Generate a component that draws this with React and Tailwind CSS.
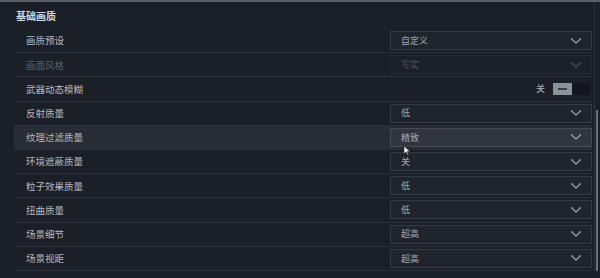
import React from "react";

const rows = [
  { label: "画质预设", value: "自定义" },
  { label: "画面风格", value: "写实", disabled: true },
  { label: "武器动态模糊", toggle: true },
  { label: "反射质量", value: "低" },
  { label: "纹理过滤质量", value: "精致", active: true },
  { label: "环境遮蔽质量", value: "关" },
  { label: "粒子效果质量", value: "低" },
  { label: "扭曲质量", value: "低" },
  { label: "场景细节", value: "超高" },
  { label: "场景视距", value: "超高" },
];

function Chevron({ dim }) {
  return (
    <svg width="12" height="8" viewBox="0 0 12 8" className="shrink-0">
      <path d="M1.5 1.8 L6 6 L10.5 1.8" fill="none" stroke={dim ? "#474e58" : "#959aa1"} strokeWidth="1.4" strokeLinecap="round" strokeLinejoin="round" />
    </svg>
  );
}

export default function App() {
  return (
    <div
      className="w-[600px] h-[278px] overflow-hidden bg-[#1b1f27] border-t-2 border-[#5b6068] relative"
      style={{ fontFamily: '"Noto Sans CJK SC", "Noto Sans", sans-serif' }}
    >
      <div className="flex">
        <div className="flex-1 pl-[14px] pr-[2px]">
          <div className="h-[27px] flex items-center pl-[2px] text-[10px] font-bold text-[#d3d6db]">基础画质</div>
          {rows.map((r, i) => (
            <div
              key={i}
              className={`h-[24.2px] flex items-center border-b border-[#2a3039] pl-[12px] ${r.active ? "bg-[#272c35]" : ""}`}
            >
              <div className={`flex-1 text-[9.5px] ${r.disabled ? "text-[#5a6069]" : "text-[#b5b9bf]"}`}>{r.label}</div>
              {r.toggle ? (
                <div className="w-[202px] h-[19px] flex items-center justify-end gap-[8px] pr-[2px]">
                  <span className="text-[9px] text-[#b5b9bf]">关</span>
                  <div className="w-[37px] h-[12px] flex bg-[#13161c]">
                    <div className="w-[19px] h-full bg-[#8d9198] flex items-center justify-center">
                      <div className="w-[9px] h-[1.5px] bg-[#3c4047]" />
                    </div>
                  </div>
                </div>
              ) : (
                <div
                  className={`w-[202px] h-[19px] flex items-center justify-between pl-[10px] pr-[9px] border ${
                    r.disabled
                      ? "border-[#262b33] bg-[#1c2028]"
                      : r.active
                      ? "border-[#444a54] bg-[#30353e]"
                      : "border-[#353b45] bg-[#20252d]"
                  }`}
                >
                  <span className={`text-[9px] ${r.disabled ? "text-[#4f555e]" : "text-[#a4a8ae]"}`}>{r.value}</span>
                  <Chevron dim={r.disabled} />
                </div>
              )}
            </div>
          ))}
        </div>
        <div className="w-[6px] relative border-l border-[#2c323b]">
          <div className="absolute left-[1px] top-[108px] bottom-0 w-[2px] bg-[#6d727a]" />
        </div>
      </div>
      <svg className="absolute left-[403px] top-[143px]" width="8" height="11" viewBox="0 0 8 11">
        <path d="M1 1 L1 9 L3 7 L4.5 10 L5.5 9.5 L4.2 6.6 L7 6.6 Z" fill="#f2f2f2" stroke="#222" strokeWidth="0.6" />
      </svg>
    </div>
  );
}
